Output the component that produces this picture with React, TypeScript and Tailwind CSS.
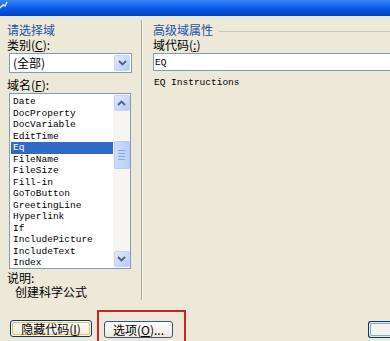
import React from "react";

const cjk = { fontFamily: '"Noto Sans CJK SC", "Noto Sans", sans-serif' };
const mono = { fontFamily: '"Liberation Mono", "DejaVu Sans Mono", monospace' };

function Chevron({ up = false }: { up?: boolean }) {
  return (
    <svg width="9" height="6" viewBox="0 0 9 6" className="block">
      <path
        d={up ? "M1 5 L4.5 1.5 L8 5" : "M1 1 L4.5 4.5 L8 1"}
        fill="none"
        stroke="#4d6185"
        strokeWidth="1.8"
      />
    </svg>
  );
}

function XPArrowBtn({ up = false, h = 15 }: { up?: boolean; h?: number }) {
  return (
    <div
      className="w-[16px] flex items-center justify-center rounded-[2px] border border-[#c3d3fd] bg-gradient-to-br from-[#e3ebfe] to-[#b7caf5]"
      style={{ height: h }}
    >
      <Chevron up={up} />
    </div>
  );
}

const items = [
  "Date",
  "DocProperty",
  "DocVariable",
  "EditTime",
  "Eq",
  "FileName",
  "FileSize",
  "Fill-in",
  "GoToButton",
  "GreetingLine",
  "Hyperlink",
  "If",
  "IncludePicture",
  "IncludeText",
  "Index",
];

export default function App() {
  return (
    <div className="w-[390px] h-[341px] overflow-hidden bg-[#ece9d8] flex flex-col text-black" style={cjk}>
      {/* title bar */}
      <div className="h-[16px] shrink-0 bg-gradient-to-b from-[#3c86f4] via-[#0a5be9] to-[#0042c6] relative">
        <svg width="8" height="9" viewBox="0 0 8 9" className="absolute left-0 top-[1px]">
          <path d="M0 7 L3 4 L5 5 L7 1" fill="none" stroke="#dfe6ee" strokeWidth="1.5" />
        </svg>
      </div>
      <div className="h-px shrink-0 bg-[#dfe6f2]" />

      {/* body */}
      <div className="flex h-[283px] shrink-0">
        {/* left column */}
        <div className="w-[141px] shrink-0 pl-[7px] pr-[9px] flex flex-col">
          <div className="h-[14px] mt-[6px] text-[12px] leading-[14px] text-[#2152a8]">请选择域</div>
          <div className="h-[14px] mt-[1px] text-[12px] leading-[14px]">
            类别(<u>C</u>):
          </div>
          <div className="mt-[1px] ml-[2px] h-[20px] w-[123px] border border-[#7f9db9] bg-white flex items-center">
            <span className="flex-1 pl-[3px] text-[12px] leading-[14px]">(全部)</span>
            <div className="mr-[1px]">
              <XPArrowBtn h={16} />
            </div>
          </div>
          <div className="h-[14px] mt-[5px] text-[12px] leading-[14px]">
            域名(<u>F</u>):
          </div>
          {/* listbox */}
          <div className="mt-[1px] ml-[2px] h-[176px] w-[122px] border border-[#7f9db9] bg-white flex">
            <div className="flex-1 pt-[2px] pl-[1px]" style={mono}>
              {items.map((it) => (
                <div
                  key={it}
                  className={
                    "h-[11.5px] text-[9.5px] leading-[11.5px] pl-[2px] whitespace-nowrap " +
                    (it === "Eq" ? "bg-[#316ac5] text-white" : "text-black")
                  }
                >
                  {it}
                </div>
              ))}
            </div>
            <div className="w-[17px] bg-[#f6f5f0] flex flex-col items-center py-[1px]">
              <XPArrowBtn up h={16} />
              <div className="h-[30px]" />
              <div className="w-[16px] h-[28px] rounded-[2px] border border-[#b8cbf6] bg-gradient-to-r from-[#cddcfc] to-[#bccef8] flex flex-col items-center justify-center gap-[2px]">
                <div className="w-[7px] h-px bg-[#8ea8e0]" />
                <div className="w-[7px] h-px bg-[#8ea8e0]" />
                <div className="w-[7px] h-px bg-[#8ea8e0]" />
                <div className="w-[7px] h-px bg-[#8ea8e0]" />
              </div>
              <div className="flex-1" />
              <XPArrowBtn h={16} />
            </div>
          </div>
          <div className="h-[13px] mt-[2px] text-[12px] leading-[13px]">说明:</div>
          <div className="h-[13px] mt-[1px] pl-[8px] text-[12px] leading-[13px]">创建科学公式</div>
        </div>

        {/* separator */}
        <div className="w-px mt-[3px] bg-[#aca899]" />
        <div className="w-px mt-[3px] bg-[#f7f6f0]" />

        {/* right column */}
        <div className="flex-1 pl-[10px] flex flex-col">
          <div className="h-[14px] mt-[6px] flex items-center">
            <span className="text-[12px] leading-[14px] text-[#2152a8]">高级域属性</span>
            <div className="flex-1 ml-[6px] mt-[2px] h-px bg-[#c9c6b6]" />
          </div>
          <div className="h-[14px] mt-[1px] text-[12px] leading-[14px]">
            域代码(<u>:</u>)
          </div>
          <div className="mt-[1px] h-[18px] border border-r-0 border-[#7f9db9] bg-white flex items-center pl-[1px]" style={mono}>
            <span className="text-[9.5px] leading-[11px]">EQ</span>
          </div>
          <div className="mt-[6px] pl-[1px] text-[9.5px] leading-[11px]" style={mono}>
            EQ Instructions
          </div>
        </div>
      </div>

      {/* buttons row */}
      <div className="flex-1 flex items-start relative">
        <div className="ml-[10px] mt-[20px] w-[82px] h-[17px] rounded-[3px] border border-[#003c74] bg-[#f7f6f0] p-[1px]">
          <div className="w-full h-full rounded-[2px] border border-[#f5c152] bg-gradient-to-b from-[#fffdf7] to-[#efece0] flex items-center justify-center text-[12px] leading-[12px]">
            隐藏代码(<u>I</u>)
          </div>
        </div>
        <div className="ml-[5px] mt-[10px] w-[89px] h-[31px] border-2 border-b-0 border-[#cc2222] pl-[5px] pt-[9px]">
          <div className="w-[69px] h-[17px] rounded-[3px] border border-[#3d5680] bg-gradient-to-b from-[#fefefe] to-[#ebe9df] flex items-center justify-center text-[12px] leading-[12px]">
            选项(<u>O</u>)...
          </div>
        </div>
        <div className="flex-1" />
        <div className="mt-[21px] w-[22px] h-[17px] rounded-l-[3px] border border-r-0 border-[#003c74] p-[1px] pr-0">
          <div className="w-full h-full rounded-l-[2px] border border-r-0 border-[#86a4e6] bg-[#f4f3ee]" />
        </div>
      </div>
    </div>
  );
}
